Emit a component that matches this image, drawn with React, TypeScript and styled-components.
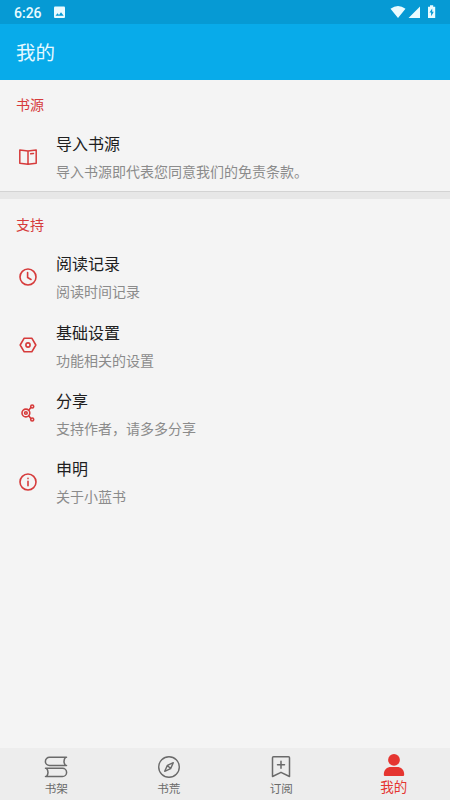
import React from "react";
import styled, { createGlobalStyle } from "styled-components";

const RED = "#d63b3b";

const GlobalStyle = createGlobalStyle`
  * { box-sizing: border-box; }
  html, body { margin: 0; padding: 0; }
  body { font-family: Roboto, "Noto Sans CJK SC", sans-serif; background: #f4f4f4; }
  svg { display: block; flex: none; }
`;

const Screen = styled.div`
  display: flex;
  flex-direction: column;
  width: 100%;
  height: 100vh;
  overflow: hidden;
  background: #f4f4f4;
`;

const StatusBar = styled.header`
  display: flex;
  align-items: center;
  height: 24px;
  padding: 0 13px 0 14px;
  background: #069ad4;
  color: #e9fbff;
`;

const Clock = styled.span`
  width: 39px;
  font-size: 14px;
  font-weight: 500;
  line-height: 24px;
  padding-top: 1px;
`;

const StatusIcons = styled.div`
  display: flex;
  align-items: center;
  margin-left: auto;
`;

const TitleBar = styled.div`
  display: flex;
  align-items: center;
  height: 56px;
  padding: 0 16px;
  background: #08abea;
  color: #e6f9ff;
  font-family: "Noto Sans CJK SC", sans-serif;
  font-size: 19.5px;
  line-height: 28px;
`;

const Content = styled.main`
  flex: 1;
  min-height: 0;
  font-family: "Noto Sans CJK SC", sans-serif;
`;

const Section = styled.section``;

const Divider = styled.div`
  height: 8px;
  margin-bottom: 0.9px;
  border-top: 1px solid #d3d3d3;
  background: #e7e7e7;
`;

const SectionTitle = styled.h2`
  margin: 0;
  height: 42.6px;
  padding: 14px 16px 0;
  color: ${RED};
  font-size: 14px;
  font-weight: 400;
  line-height: 20px;
`;

const Row = styled.div`
  display: flex;
  align-items: center;
  height: 68.4px;
  padding-left: 18px;
`;

const RowIcon = styled.div`
  width: 38px;
  color: ${RED};
`;

const RowTitle = styled.div`
  color: #202020;
  font-size: 16px;
  line-height: 24px;
  margin-bottom: 5px;
`;

const RowText = styled.div`
  color: #8b8b8b;
  font-size: 14px;
  line-height: 22px;
`;

const TabBar = styled.nav`
  display: grid;
  grid-template-columns: repeat(4, 1fr);
  height: 52px;
  background: #ededed;
  font-family: "Noto Sans CJK SC", sans-serif;
`;

const Tab = styled.div<{ $active?: boolean }>`
  display: flex;
  flex-direction: column;
  align-items: center;
  padding-top: ${(p) => (p.$active ? "5px" : "7px")};
  color: ${(p) => (p.$active ? "#e53530" : "#6a6a6a")};
  font-size: ${(p) => (p.$active ? "13.5px" : "11.6px")};
  line-height: 18px;
`;

const Line = ({ children, size = 20, width = 1.6 }: { children: React.ReactNode; size?: number; width?: number }) => (
  <svg width={size} height={size} viewBox={`0 0 ${size} ${size}`} fill="none" stroke="currentColor" strokeWidth={width} strokeLinecap="round" strokeLinejoin="round">
    {children}
  </svg>
);

const BookIcon = () => (
  <Line width={1.5}>
    <path d="M10 4 1.800 3v13.200L10 17.200l8.200-1V3Z M10 4v13 M12.700 6.800l2.800-.4" />
  </Line>
);
const ClockIcon = () => (
  <Line>
    <circle cx="10" cy="10" r="8" />
    <path d="M9.600 5.500v5l3.400 2" />
  </Line>
);
const SettingsIcon = () => (
  <Line>
    <path d="M6.200 3.200h7.600L17.800 10l-4 6.800H6.200L2.200 10Z" />
    <circle cx="10" cy="10" r="2.100" />
  </Line>
);
const ShareIcon = () => (
  <Line width={1.6}>
    <circle cx="7.900" cy="10" r="3.900" />
    <circle cx="7.900" cy="10" r="1.300" />
    <path d="m10.700 7.200 2.200-2.700M10.700 12.800l2.200 2.700" />
    <circle cx="14.200" cy="3.500" r="1.500" />
    <circle cx="14.200" cy="16.500" r="1.500" />
  </Line>
);
const InfoIcon = () => (
  <Line>
    <circle cx="10" cy="10" r="8" />
    <path d="M10 9.200v4.600M10 6.400v.2" />
  </Line>
);

const ShelfIcon = () => (
  <Line size={24} width={1.5}>
    <path d="M22.500 2.300H5.500a4 4 0 0 0 0 8.200h17M21.500 2.300q-3 4.100 0 8.200M1.500 13.300h17a4 4 0 0 1 0 8.200h-17M2.500 13.300q3 4.100 0 8.200" />
  </Line>
);
const CompassIcon = () => (
  <Line size={24} width={1.4}>
    <circle cx="12" cy="12" r="10.300" />
    <path d="m16.300 7.700-2.700 5.900-5.900 2.700 2.700-5.900Z M10.400 10.400l3.200 3.200" />
  </Line>
);
const BookmarkIcon = () => (
  <Line size={24} width={1.5}>
    <path d="M4.500 1.700h15a1 1 0 0 1 1 1v18.800L12 17.300l-8.500 4.200V2.700a1 1 0 0 1 1-1Z M12 6.200v7M8.500 9.700h7" />
  </Line>
);
const PersonIcon = () => (
  <svg width="24" height="24" viewBox="0 0 24 24" fill="currentColor">
    <circle cx="12" cy="6.900" r="5.900" />
    <path d="M1.800 21.500c0-5 3.200-7.500 7.200-7.500h6c4 0 7.200 2.500 7.200 7.500 0 1-.6 1.500-1.500 1.500H3.300c-.9 0-1.500-.5-1.500-1.500Z" />
  </svg>
);

const PictureIcon = () => (
  <svg width="13" height="13" viewBox="0 0 13 13">
    <rect x="1" y="0.500" width="11" height="11.500" rx="1" fill="#e9fbff" />
    <path d="m2.500 9.800 2-2.600 1.500 1.700 2-2.700 2.700 3.600Z" fill="#069ad4" />
  </svg>
);
const SignalIcons = () => (
  <svg width="50" height="16" viewBox="0 0 50 16" fill="#e9fbff">
    <path d="M3.500 4.800Q11 -.6 18.500 4.800L11 14Z M33 2.500V14H21.500Z M41 2.800h2V1.200h3.200v1.600h2V14H41Z" />
    <path d="m45.200 4.600-2.700 4h1.600v3.600l2.700-4.400h-1.600Z" fill="#069ad4" />
  </svg>
);

const support = [
  { icon: <ClockIcon />, title: "阅读记录", text: "阅读时间记录" },
  { icon: <SettingsIcon />, title: "基础设置", text: "功能相关的设置" },
  { icon: <ShareIcon />, title: "分享", text: "支持作者，请多多分享" },
  { icon: <InfoIcon />, title: "申明", text: "关于小蓝书" },
];

const Item = ({ icon, title, text }: { icon: React.ReactNode; title: string; text: string }) => (
  <Row>
    <RowIcon>{icon}</RowIcon>
    <div>
      <RowTitle>{title}</RowTitle>
      <RowText>{text}</RowText>
    </div>
  </Row>
);

export default function App() {
  return (
    <Screen>
      <GlobalStyle />
      <StatusBar>
        <Clock>6:26</Clock>
        <PictureIcon />
        <StatusIcons>
          <SignalIcons />
        </StatusIcons>
      </StatusBar>
      <TitleBar>我的</TitleBar>
      <Content>
        <Section>
          <SectionTitle>书源</SectionTitle>
          <Item icon={<BookIcon />} title="导入书源" text="导入书源即代表您同意我们的免责条款。" />
        </Section>
        <Divider />
        <Section>
          <SectionTitle>支持</SectionTitle>
          {support.map((s) => (
            <Item key={s.title} {...s} />
          ))}
        </Section>
      </Content>
      <TabBar>
        <Tab><ShelfIcon />书架</Tab>
        <Tab><CompassIcon />书荒</Tab>
        <Tab><BookmarkIcon />订阅</Tab>
        <Tab $active><PersonIcon />我的</Tab>
      </TabBar>
    </Screen>
  );
}
